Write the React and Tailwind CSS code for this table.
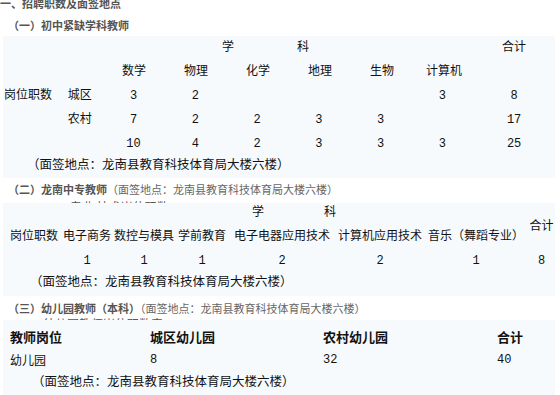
import React from "react";

const sans = { fontFamily: '"Noto Sans CJK SC", sans-serif' };
const tbl = { fontFamily: '"Liberation Mono", "Noto Sans CJK SC", monospace' };

function Note({ pl, h }) {
  return (
    <div className={`flex items-center text-[12.5px] whitespace-nowrap ${h} ${pl}`}>
      （面签地点：龙南县教育科技体育局大楼六楼）
    </div>
  );
}

export default function App() {
  const subjects = ["数学", "物理", "化学", "地理", "生物", "计算机"];
  const rows = [
    { a: "岗位职数", b: "城区", v: ["3", "2", "", "", "", "3"], t: "8" },
    { a: "", b: "农村", v: ["7", "2", "2", "3", "3", ""], t: "17" },
    { a: "", b: "", v: ["10", "4", "2", "3", "3", "3"], t: "25" },
  ];
  const t2 = [
    ["电子商务", "1"],
    ["数控与模具", "1"],
    ["学前教育", "1"],
    ["电子电器应用技术", "2"],
    ["计算机应用技术", "2"],
    ["音乐（舞蹈专业）", "1"],
  ];
  return (
    <div className="w-[560px] h-[395px] overflow-hidden bg-white text-[#111]" style={sans}>
      {/* Title */}
      <div className="-mt-[5px] leading-[16px] text-[11px] font-bold text-[#555] whitespace-nowrap">
        一、招聘职数及面签地点
      </div>
      <div className="mt-[6px] pl-[8px] leading-[16px] text-[11px] font-bold text-[#555] whitespace-nowrap">
        （一）初中紧缺学科教师
      </div>

      {/* Table 1 */}
      <div className="mt-[3px] ml-[3px] w-[552px] bg-[#f6fafd] pb-[1px] text-[12px]" style={tbl}>
        <div className="flex h-[24px] items-center">
          <div className="w-[470px] flex">
            <span className="ml-[219px]">学</span>
            <span className="ml-[63px]">科</span>
          </div>
          <div className="w-[82px] text-center">合计</div>
        </div>
        <div className="flex h-[24px] items-center">
          <div className="w-[100px]" />
          {subjects.map((s) => (
            <div key={s} className="w-[62px] text-center">{s}</div>
          ))}
        </div>
        {rows.map((r, i) => (
          <div key={i} className={`flex items-center ${i === 2 ? "h-[23px]" : "h-[24px]"}`}>
            <div className="w-[59px] pl-[1px] whitespace-nowrap">{r.a}</div>
            <div className="w-[41px] pl-[6px]">{r.b}</div>
            {r.v.map((v, j) => (
              <div key={j} className="w-[62px] text-center">{v}</div>
            ))}
            <div className="w-[82px] text-center">{r.t}</div>
          </div>
        ))}
        <Note pl="pl-[24px]" h="h-[22px]" />
      </div>

      {/* Section 2 */}
      <div className="mt-[3px] pl-[8px] leading-[16px] text-[11px] text-[#666] whitespace-nowrap">
        <span className="font-bold text-[#555]">（二）龙南中专教师</span>
        <span>（面签地点：龙南县教育科技体育局大楼六楼）</span>
      </div>
      <div className="h-[6px] overflow-hidden">
        <div className="mt-[4px] pl-[70px] text-[12px] leading-[12px] text-[#555] whitespace-nowrap">
          专业 技术岗位职数
        </div>
      </div>

      <div className="ml-[3px] w-[552px] bg-[#f6fafd] pb-[1px] text-[12px]" style={tbl}>
        <div className="grid grid-cols-[59px_50px_64px_52px_108px_88px_104px_27px] grid-rows-[20px_28px_20px]">
          <div className="col-span-7 flex items-center">
            <span className="ml-[249px]">学</span>
            <span className="ml-[60px]">科</span>
          </div>
          <div className="row-span-2 flex items-center justify-center">合计</div>
          <div className="flex items-center pl-[7px] whitespace-nowrap">岗位职数</div>
          {t2.map(([h]) => (
            <div key={h} className="flex items-center justify-center whitespace-nowrap">{h}</div>
          ))}
          <div />
          {t2.map(([h, v]) => (
            <div key={h + "v"} className="flex items-center justify-center">{v}</div>
          ))}
          <div className="flex items-center justify-center">8</div>
        </div>
        <Note pl="pl-[27px]" h="h-[24px]" />
      </div>

      {/* Section 3 */}
      <div className="mt-[4px] pl-[8px] leading-[16px] text-[11px] text-[#666] whitespace-nowrap">
        <span className="font-bold text-[#555]">（三）幼儿园教师（本科）</span>
        <span>（面签地点：龙南县教育科技体育局大楼六楼）</span>
      </div>
      <div className="h-[4px] overflow-hidden">
        <div className="mt-[2px] pl-[43px] text-[12px] leading-[12px] text-[#555] whitespace-nowrap">
          幼儿园教师岗位职数表
        </div>
      </div>

      <div className="ml-[3px] w-[552px] bg-[#f6fafd] pt-[5px] h-[80px] text-[12px]" style={tbl}>
        <div className="flex h-[24px] items-center font-bold text-[13px]" style={sans}>
          <div className="w-[147px] pl-[7px]">教师岗位</div>
          <div className="w-[173px]">城区幼儿园</div>
          <div className="w-[174px]">农村幼儿园</div>
          <div>合计</div>
        </div>
        <div className="flex h-[22px] items-center">
          <div className="w-[147px] pl-[7px]" style={sans}>幼儿园</div>
          <div className="w-[173px]">8</div>
          <div className="w-[174px]">32</div>
          <div>40</div>
        </div>
        <Note pl="pl-[29px]" h="h-[24px]" />
      </div>
    </div>
  );
}
